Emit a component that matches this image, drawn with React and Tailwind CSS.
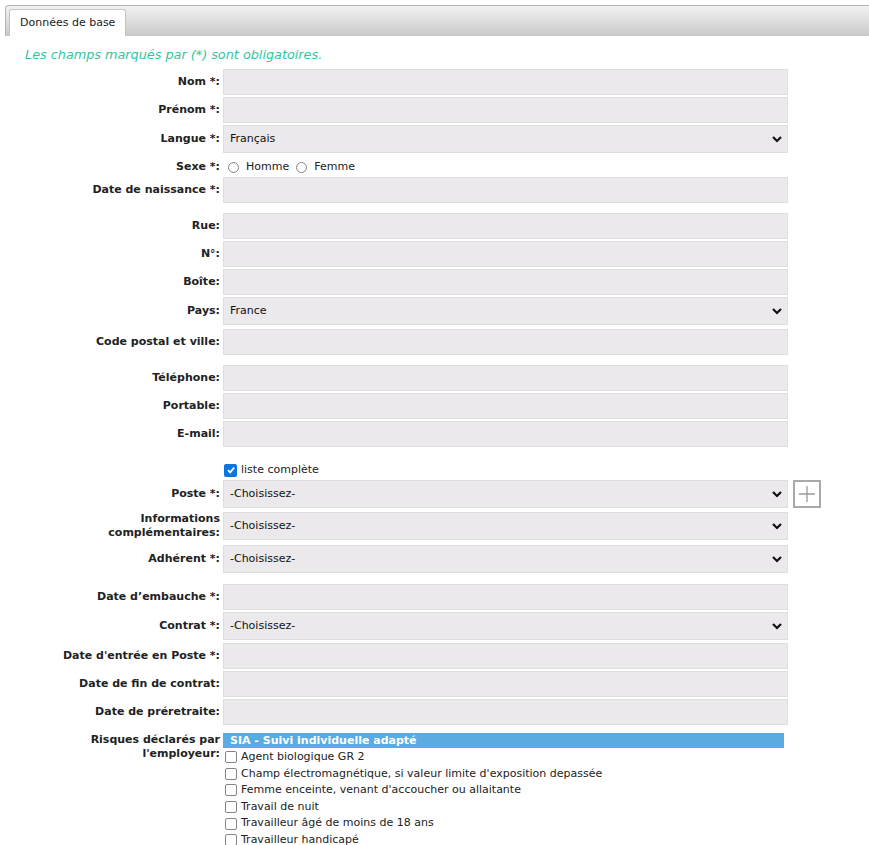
import React from "react";

const Chevron = () => (
  <svg
    className="pointer-events-none absolute right-[4px] top-1/2 -translate-y-1/2"
    width="12"
    height="8"
    viewBox="0 0 12 8"
  >
    <path d="M2 2 L6 6 L10 2" fill="none" stroke="#111" strokeWidth="2.2" />
  </svg>
);

const Label = ({ children, top }) => (
  <div
    className={`w-[223px] shrink-0 pr-[3px] text-right font-bold text-[11px] leading-[14px] text-[#222] ${
      top ? "self-start" : "self-center"
    }`}
  >
    {children}
  </div>
);

const TextRow = ({ label, mt = "mt-[2px]" }) => (
  <div className={`flex ${mt}`}>
    <Label>{label}</Label>
    <div className="h-[26px] w-[565px] border border-[#dedede] bg-[#ebe9eb]" />
  </div>
);

const SelectRow = ({ label, value, mt = "mt-[2px]", extra }) => (
  <div className={`flex items-center ${mt}`}>
    <Label>{label}</Label>
    <div className="relative flex h-[28px] w-[565px] items-center border border-[#dedede] bg-[#ebe9eb] pl-[6px] text-[11px] text-[#111]">
      {value}
      <Chevron />
    </div>
    {extra}
  </div>
);

const Box = ({ checked }) =>
  checked ? (
    <span className="flex h-[13px] w-[13px] items-center justify-center rounded-[2px] bg-[#0b75e0]">
      <svg width="10" height="10" viewBox="0 0 10 10">
        <path d="M2 5.2 L4.2 7.4 L8.2 2.6" fill="none" stroke="#fff" strokeWidth="1.8" />
      </svg>
    </span>
  ) : (
    <span className="h-[12px] w-[12px] rounded-[2px] border border-[#858585] bg-white" />
  );

const Radio = () => (
  <span className="h-[11px] w-[11px] rounded-full border border-[#858585] bg-white" />
);

const risques = [
  "Agent biologique GR 2",
  "Champ électromagnétique, si valeur limite d'exposition depassée",
  "Femme enceinte, venant d'accoucher ou allaitante",
  "Travail de nuit",
  "Travailleur âgé de moins de 18 ans",
  "Travailleur handicapé",
];

export default function App() {
  return (
    <div
      className="h-[845px] w-[869px] overflow-hidden bg-white"
      style={{ fontFamily: '"DejaVu Sans", Verdana, sans-serif' }}
    >
      {/* TABS */}
      <div className="ml-[5px] mt-[5px] flex h-[31px] items-end rounded-tl-[4px] border-l border-t border-[#b5b5b5] bg-gradient-to-b from-[#f2f2f2] to-[#c9c9c9] pl-[3px]">
        <div className="flex h-[27px] items-center rounded-t-[3px] border border-b-0 border-[#c5c5c5] bg-white px-[10px] text-[11px] text-[#222]">
          Données de base
        </div>
      </div>

      <p className="ml-[25px] mt-[11px] text-[12.8px] italic leading-[16px] text-[#2ec79f]">
        Les champs marqués par (*) sont obligatoires.
      </p>

      <div className="mt-[6px]">
        <TextRow label="Nom *:" mt="mt-0" />
        <TextRow label="Prénom *:" />
        <SelectRow label="Langue *:" value="Français" />

        <div className="mt-[5px] flex h-[18px] items-center">
          <Label>Sexe *:</Label>
          <div className="flex items-center pl-[5px] text-[11px] text-[#222]">
            <Radio />
            <span className="ml-[7px]">Homme</span>
            <span className="ml-[7px]" />
            <Radio />
            <span className="ml-[7px]">Femme</span>
          </div>
        </div>

        <TextRow label="Date de naissance *:" mt="mt-[1px]" />

        <TextRow label="Rue:" mt="mt-[10px]" />
        <TextRow label="N°:" />
        <TextRow label="Boîte:" />
        <SelectRow label="Pays:" value="France" />
        <TextRow label="Code postal et ville:" mt="mt-[4px]" />

        <TextRow label="Téléphone:" mt="mt-[10px]" />
        <TextRow label="Portable:" />
        <TextRow label="E-mail:" />

        <div className="mt-[15px] flex h-[16px] items-center">
          <div className="w-[223px] shrink-0" />
          <div className="flex items-center pl-[1px] text-[11px] text-[#222]">
            <Box checked />
            <span className="ml-[4px]">liste complète</span>
          </div>
        </div>

        <SelectRow
          label="Poste *:"
          value="-Choisissez-"
          extra={
            <div className="ml-[5px] flex h-[28px] w-[28px] items-center justify-center border-2 border-[#a9a9a9] bg-white">
              <svg width="18" height="18" viewBox="0 0 18 18">
                <path d="M9 1 V17 M1 9 H17" stroke="#9a9a9a" strokeWidth="1.3" />
              </svg>
            </div>
          }
        />
        <SelectRow
          label={
            <>
              Informations
              <br />
              complémentaires:
            </>
          }
          value="-Choisissez-"
          mt="mt-[4px]"
        />
        <SelectRow label="Adhérent *:" value="-Choisissez-" mt="mt-[5px]" />

        <TextRow label="Date d’embauche *:" mt="mt-[11px]" />
        <SelectRow label="Contrat *:" value="-Choisissez-" mt="mt-[2px]" />
        <TextRow label="Date d'entrée en Poste *:" mt="mt-[3px]" />
        <TextRow label="Date de fin de contrat:" />
        <TextRow label="Date de préretraite:" />

        <div className="mt-[8px] flex">
          <Label top>
            Risques déclarés par
            <br />
            l'employeur:
          </Label>
          <div className="w-[561px]">
            <div className="h-[15px] bg-[#5aabdf] pl-[7px] text-[11px] font-bold leading-[15px] text-white">
              SIA - Suivi individuelle adapté
            </div>
            <div className="mt-[1px]">
              {risques.map((r) => (
                <div key={r} className="flex h-[16.6px] items-center pl-[2px] text-[11px] text-[#222]">
                  <Box />
                  <span className="ml-[4px]">{r}</span>
                </div>
              ))}
            </div>
          </div>
        </div>
      </div>
    </div>
  );
}
